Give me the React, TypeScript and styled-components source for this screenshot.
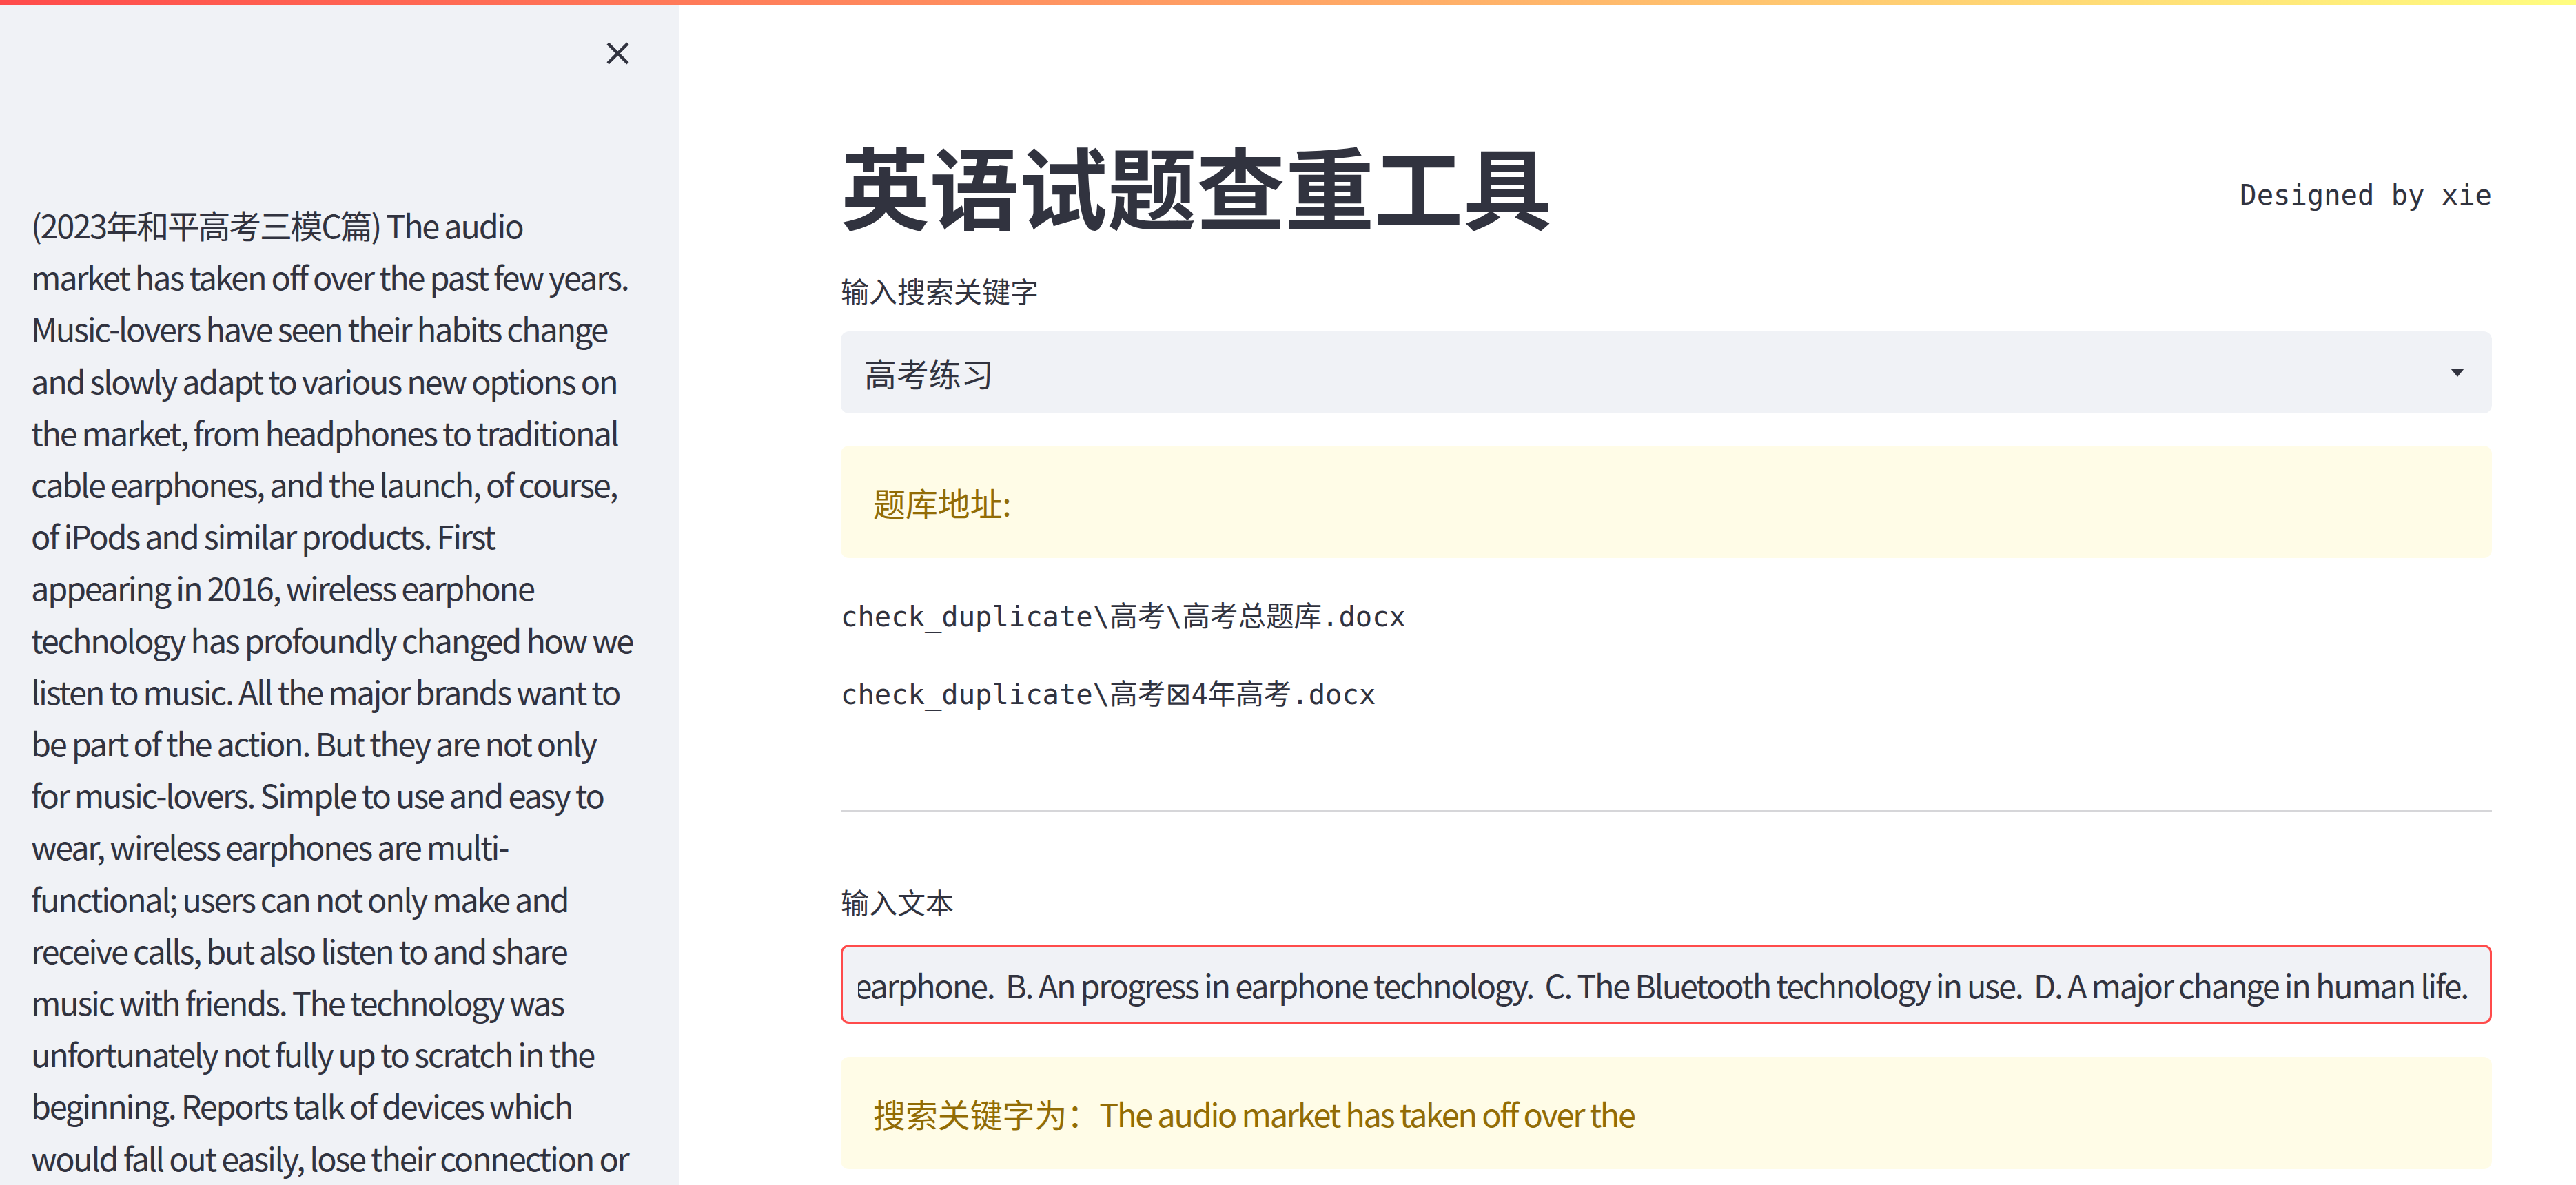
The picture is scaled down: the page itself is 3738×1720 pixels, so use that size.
import React from "react";
import styled, { createGlobalStyle } from "styled-components";

const GlobalStyle = createGlobalStyle`
  html, body {
    margin: 0;
    padding: 0;
    height: 100%;
    overflow: hidden;
    background: #ffffff;
  }
  body {
    font-family: "Noto Sans CJK SC", "Noto Sans", sans-serif;
    color: rgb(49, 51, 63);
    -webkit-font-smoothing: antialiased;
  }
  * { box-sizing: border-box; }
`;

const TEXT = "rgb(49, 51, 63)";
const MONO = `"DejaVu Sans Mono", "Noto Sans CJK SC", monospace`;
const LATIN_TRACK = "-0.048em";

const Decoration = styled.div`
  position: fixed;
  top: 0;
  left: 0;
  right: 0;
  height: 7px;
  background: linear-gradient(90deg, rgb(255, 75, 75), rgb(255, 253, 128));
  z-index: 10;
`;

const Layout = styled.div`
  display: flex;
  height: 100vh;
  overflow: hidden;
`;

const Sidebar = styled.aside`
  width: 985px;
  flex-shrink: 0;
  background: #f0f2f6;
  padding: 0 45px;
  overflow: hidden;
`;

const SidebarHeader = styled.div`
  display: flex;
  justify-content: flex-end;
  padding: 50px 16px 0 0;
`;

const CloseButton = styled.button`
  width: 55px;
  height: 55px;
  padding: 0;
  border: none;
  background: transparent;
  color: ${TEXT};
  display: flex;
  align-items: center;
  justify-content: center;
  cursor: pointer;
  svg { display: block; }
`;

const SidebarText = styled.p`
  margin: 184px 0 0 0;
  font-size: 46.9px;
  line-height: 75.2px;
  white-space: nowrap;
  letter-spacing: ${LATIN_TRACK};
  color: ${TEXT};
`;

const Main = styled.main`
  flex: 1;
  min-width: 0;
  padding: 190px 122px 0 235px;
  overflow: hidden;
`;

const HeaderRow = styled.div`
  display: flex;
  justify-content: space-between;
  align-items: flex-start;
`;

const Title = styled.h1`
  margin: 0;
  font-size: 129px;
  line-height: 155px;
  font-weight: 700;
  color: ${TEXT};
  letter-spacing: 0;
`;

const MonoText = styled.div<{ $top?: number }>`
  font-family: ${MONO};
  font-size: 40.5px;
  line-height: 65px;
  color: ${TEXT};
  white-space: pre;
  margin-top: ${(p) => p.$top ?? 0}px;
`;

const Label = styled.div<{ $top: number }>`
  margin-top: ${(p) => p.$top}px;
  font-size: 41px;
  line-height: 65px;
  color: ${TEXT};
`;

const Select = styled.div`
  margin-top: 27px;
  height: 119px;
  background: #f0f2f6;
  border-radius: 12px;
  display: flex;
  align-items: center;
  justify-content: space-between;
  padding: 0 40px 0 34px;
  font-size: 46.9px;
  color: ${TEXT};
`;

const Caret = styled.span`
  width: 0;
  height: 0;
  border-left: 10.5px solid transparent;
  border-right: 10.5px solid transparent;
  border-top: 12px solid ${TEXT};
`;

const Alert = styled.div<{ $top: number }>`
  margin-top: ${(p) => p.$top}px;
  height: 163px;
  background: rgb(255, 252, 231);
  border-radius: 12px;
  padding: 0 47px;
  display: flex;
  align-items: center;
  font-size: 46.9px;
  color: rgb(146, 108, 5);
  white-space: pre;
`;

const Latin = styled.span`
  letter-spacing: ${LATIN_TRACK};
`;

const Divider = styled.hr`
  margin: 135px 0 0 0;
  border: none;
  height: 3px;
  background: rgba(49, 51, 63, 0.2);
`;

const TextInput = styled.div`
  margin-top: 30px;
  height: 115px;
  background: #f0f2f6;
  border: 3px solid rgb(255, 75, 75);
  border-radius: 12px;
  display: flex;
  align-items: center;
  justify-content: flex-end;
  padding: 0 32px 0 22px;
  overflow: hidden;
`;

const InputValue = styled.div`
  display: flex;
  justify-content: flex-end;
  overflow: hidden;
  width: 100%;
  span {
    white-space: pre;
    font-size: 46.9px;
    letter-spacing: ${LATIN_TRACK};
    color: ${TEXT};
    flex-shrink: 0;
  }
`;

const Tofu = styled.span`
  font-family: "DejaVu Sans", sans-serif;
  font-size: 1.1em;
`;

const sidebarLines = [
  "(2023年和平高考三模C篇) The audio",
  "market has taken off over the past few years.",
  "Music-lovers have seen their habits change",
  "and slowly adapt to various new options on",
  "the market, from headphones to traditional",
  "cable earphones, and the launch, of course,",
  "of iPods and similar products. First",
  "appearing in 2016, wireless earphone",
  "technology has profoundly changed how we",
  "listen to music. All the major brands want to",
  "be part of the action. But they are not only",
  "for music-lovers. Simple to use and easy to",
  "wear, wireless earphones are multi-",
  "functional; users can not only make and",
  "receive calls, but also listen to and share",
  "music with friends. The technology was",
  "unfortunately not fully up to scratch in the",
  "beginning. Reports talk of devices which",
  "would fall out easily, lose their connection or",
  "run out of battery quickly. But the brands have",
];

const inputValue =
  "What is the passage mainly about?  A. The history of the wireless earphone.  B. An progress in earphone technology.  C. The Bluetooth technology in use.  D. A major change in human life.";

export default function App() {
  return (
    <>
      <GlobalStyle />
      <Decoration />
      <Layout>
        <Sidebar>
          <SidebarHeader>
            <CloseButton aria-label="Close sidebar">
              <svg width="55" height="55" viewBox="0 0 24 24" fill="currentColor">
                <path d="M19 6.41L17.59 5 12 10.59 6.41 5 5 6.41 10.59 12 5 17.59 6.41 19 12 13.41 17.59 19 19 17.59 13.41 12z" />
              </svg>
            </CloseButton>
          </SidebarHeader>
          <SidebarText>
            {sidebarLines.map((line, i) => (
              <React.Fragment key={i}>
                {line}
                {i < sidebarLines.length - 1 && <br />}
              </React.Fragment>
            ))}
          </SidebarText>
        </Sidebar>
        <Main>
          <HeaderRow>
            <Title>英语试题查重工具</Title>
            <MonoText $top={61}>Designed by xie</MonoText>
          </HeaderRow>
          <Label $top={44}>输入搜索关键字</Label>
          <Select>
            <span>高考练习</span>
            <Caret />
          </Select>
          <Alert $top={47}>题库地址:</Alert>
          <MonoText $top={53}>check_duplicate\高考\高考总题库.docx</MonoText>
          <MonoText $top={47}>
            check_duplicate\高考<Tofu>⊠</Tofu>4年高考.docx
          </MonoText>
          <Divider />
          <Label $top={97}>输入文本</Label>
          <TextInput>
            <InputValue>
              <span>{inputValue}</span>
            </InputValue>
          </TextInput>
          <Alert $top={48}>
            搜索关键字为：<Latin>The audio market has taken off over the</Latin>
          </Alert>
        </Main>
      </Layout>
    </>
  );
}
